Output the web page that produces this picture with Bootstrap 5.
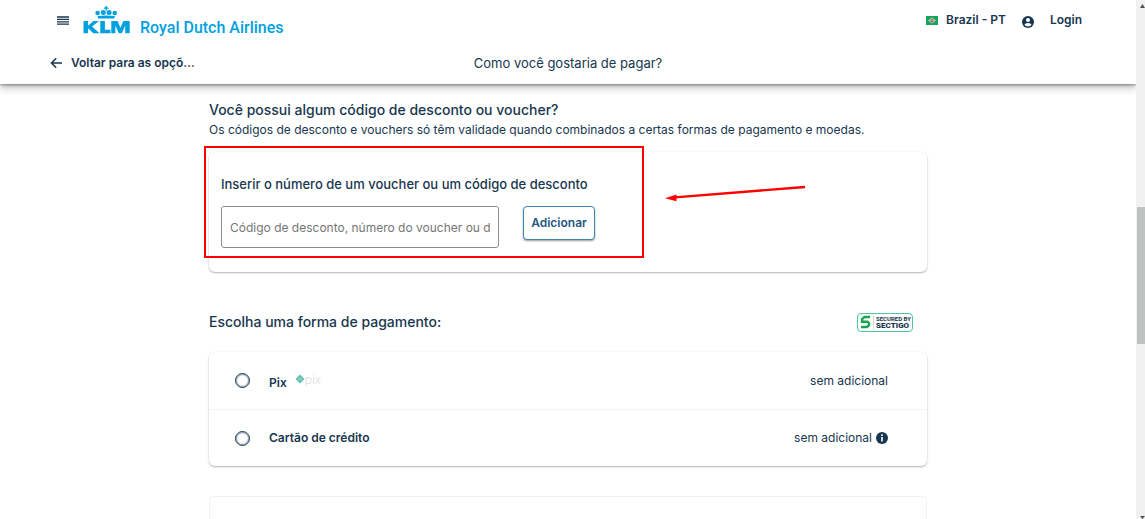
<!DOCTYPE html>
<html lang="pt-BR">
<head>
<meta charset="utf-8">
<meta name="viewport" content="width=device-width, initial-scale=1">
<title>KLM - Pagamento</title>
<link href="https://cdn.jsdelivr.net/npm/bootstrap@5.3.0/dist/css/bootstrap.min.css" rel="stylesheet">
<style>
:root { --navy: #17364f; --klm: #00a1de; --alert: #fe0000; }
body { font-family: Inter, "Open Sans", sans-serif; font-size: 12px; line-height: 20px; color: var(--navy); background: #fff; }
a { color: inherit; text-decoration: none; }
svg { display: block; flex: none; }
.site-header { z-index: 2; padding: 0 50px; box-shadow: 0 1px 3px rgba(0,0,0,.4), 0 3px 9px rgba(0,0,0,.28); }
.brand-row { height: 40px; }
.step-row { height: 44px; padding-top: 2px; display: grid; grid-template-columns: 1fr auto 1fr; }
.icon-button { border: 0; padding: 0; background: none; color: inherit; margin-left: 7px; }
.brand-link { color: var(--klm); gap: 10px; margin-left: 14px; }
.brand-name { padding-top: 16px; font-family: Roboto, sans-serif; font-weight: 500; font-size: 16px; }
.strong-text { font-weight: 600; }
.step-title, .row-title { font-size: 13px; line-height: 20px; font-weight: 500; }
.step-title { font-weight: 400; }
.content-column { max-width: 718px; padding-top: 16px; }
.section-title { font-size: 14px; line-height: 20px; font-weight: 500; margin: 0; }
.panel { border-radius: 6px; background: #fff; box-shadow: 0 1px 2px rgba(0,0,0,.3), 0 0 2px rgba(0,0,0,.04); }
.voucher-panel { margin-top: 12px; padding: 22px 12px 24px; }
.voucher-label { display: block; margin-bottom: 12px; }
.voucher-input { width: 278px; height: 42px; border: 1px solid #8c8c8c; border-radius: 3px; padding: 0 8px; font-size: 12px; color: var(--navy); }
.voucher-input::placeholder { color: #757575; opacity: 1; }
.add-button { width: 72px; height: 34px; padding: 0; border: 1px solid #4584ae; border-radius: 4px; background: #fff; color: #25567f; font-size: 12px; font-weight: 600; box-shadow: 0 1px 2px rgba(0,0,0,.4); }
.highlight-frame { left: -5px; top: -6px; width: 440px; height: 112px; border: 2px solid var(--alert); pointer-events: none; }
.highlight-arrow { left: 455px; top: 32px; pointer-events: none; }
.choice-heading { margin-top: 40px; padding-right: 14px; }
.choice-panel { margin-top: 20px; }
.choice { min-height: 57px; padding: 0 39px 0 26px; }
.choice + .choice { border-top: 1px solid #f1f3f4; }
.choice .form-check-input { width: 15px; height: 15px; margin: 0 19px 0 0; border: 1px solid var(--navy); box-shadow: inset 0 0 1px 1px rgba(23,54,79,.5); background-color: #fff; }
.choice .form-check-input:checked { background-color: var(--navy); }
.pix-word { font-family: Lato, sans-serif; font-size: 13px; line-height: 12px; font-weight: 300; color: #d3d3d3; }
.pix-logo { margin-bottom: 4px; }
.seal { border: 1px solid #52c3a0; border-radius: 4px; height: 19px; padding: 0 1px 0 2px; gap: 2px; }
.seal-text { font-family: "Roboto", sans-serif; font-weight: 700; line-height: 7px; font-size: 6px; padding-left: 2px; border-left: 1px solid #d5dadd; white-space: nowrap; }
.seal-name { font-size: 8px; line-height: 8px; font-weight: 900; }
.next-panel { margin-top: 30px; min-height: 120px; border: 1px solid #f0f1f1; border-radius: 4px; }
.scroll-track { width: 9px; background: #f1f1f1; }
.scroll-thumb { margin-left: 1px; background: #c0c2c1; }
</style>
<script src="https://cdn.jsdelivr.net/npm/bootstrap@5.3.0/dist/js/bootstrap.bundle.min.js" defer></script>
</head>
<body>
<div class="d-flex vh-100 overflow-hidden">
  <div class="d-flex flex-column flex-grow-1 overflow-hidden">
    <header class="site-header position-relative bg-white flex-shrink-0">
      <nav class="brand-row d-flex align-items-center" aria-label="Principal">
        <button class="icon-button" type="button" aria-label="Menu">
          <svg width="12" height="9" viewBox="0 0 12 9" fill="none" stroke="currentColor" stroke-width="1.300"><path d="M0 1h12M0 3.400h12M0 5.800h12M0 8.200h12"/></svg>
        </button>
        <a class="brand-link d-flex align-items-center" href="#" aria-label="KLM Royal Dutch Airlines">
          <svg width="47" height="28" viewBox="0 0 47 28" fill="currentColor" aria-hidden="true">
            <path d="M22.500 0h1.400v1.500h1.600v1.300h-1.600v1.600h-1.400V2.800h-1.600V1.500h1.600z"/>
            <circle cx="14.600" cy="7" r="2.300"/><circle cx="20.300" cy="6.600" r="2.500"/><circle cx="26.100" cy="6.600" r="2.500"/><circle cx="31.700" cy="7" r="2.300"/>
            <path d="M14.500 10q8.700-1 17.400 0l-.7 2.600h-16z"/>
            <path d="M.5 15h4.600v4.700l5.200-4.700h5.600l-6.800 5.600 7.400 6.600h-6.200l-5.200-5v5H.500zM17.300 15h4.600v8.700h5.600v3.500H17.300zM28.300 15h6.300l2.800 6.800 3-6.800h6.300v12.200h-4.500v-7.600l-3.400 7.600h-3l-3.400-7.600v7.600h-4.100z"/>
          </svg>
          <span class="brand-name">Royal Dutch Airlines</span>
        </a>
        <a class="strong-text d-flex align-items-center ms-auto" href="#">
          <svg class="me-2" width="12" height="9" viewBox="0 0 12 9"><path fill="#18a45b" d="M0 0h12v9H0z"/><path fill="#e0bf9e" d="M6 1.600 10 4.500 6 7.400 2 4.500z"/><circle cx="6" cy="4.500" r="1.700" fill="#58667e"/><path d="M4.200 4q2-.4 3.600 1" fill="none" stroke="#fff" stroke-width=".6"/></svg>
          Brazil - PT
        </a>
        <a class="strong-text d-flex align-items-center ms-3" href="#">
          <svg class="me-3 mt-1" width="12" height="12" viewBox="0 0 12 12"><circle cx="6" cy="6" r="6" fill="#17364f"/><circle cx="6" cy="4.100" r="2" fill="#fff"/><path fill="#fff" d="M2.400 8.700Q3 7 6 7t3.600 1.700Q8.300 10.400 6 10.400T2.400 8.700z"/></svg>
          <span class="me-1">Login</span>
        </a>
      </nav>
      <div class="step-row align-items-center">
        <a class="strong-text d-flex align-items-center" href="#">
          <svg class="me-2" width="13" height="12" viewBox="0 0 13 12" fill="none" stroke="currentColor" stroke-width="1.500"><path d="M12 6H1.500M6.200 1.300 1.500 6l4.700 4.700"/></svg>
          <span>Voltar para as opçõ…</span>
        </a>
        <h1 class="step-title m-0">Como você gostaria de pagar?</h1>
      </div>
    </header>
    <main class="content-column w-100 mx-auto">
      <h2 class="section-title">Você possui algum código de desconto ou voucher?</h2>
      <p class="m-0">Os códigos de desconto e vouchers só têm validade quando combinados a certas formas de pagamento e moedas.</p>
      <form class="panel voucher-panel position-relative">
        <label class="voucher-label row-title" for="voucher">Inserir o número de um voucher ou um código de desconto</label>
        <div class="d-flex align-items-start gap-4">
          <input class="voucher-input" id="voucher" type="text" placeholder="Código de desconto, número do voucher ou do cartão">
          <button class="add-button" type="button">Adicionar</button>
        </div>
        <div class="highlight-frame position-absolute"></div>
        <svg class="highlight-arrow position-absolute" width="144" height="18" viewBox="0 0 144 18" aria-hidden="true"><path d="M11 13.300 141 3" stroke="#fe0000" stroke-width="2.300"/><path d="M1 14.200 12.500 10.500v6.700z" fill="#fe0000"/></svg>
      </form>
      <div class="choice-heading d-flex align-items-center justify-content-between">
        <h2 class="section-title">Escolha uma forma de pagamento:</h2>
        <div class="seal d-flex align-items-center">
          <svg width="11" height="14" viewBox="0 0 11 14" fill="none" stroke="#17a650" stroke-width="2.400"><path d="M10 2H4.500L2 4.200v2.600h5.500L9 8.200v2L7 12H1"/></svg>
          <div class="seal-text">SECURED BY<div class="seal-name">SECTIGO</div></div>
        </div>
      </div>
      <div class="panel choice-panel">
        <div class="choice d-flex align-items-center">
          <input class="form-check-input" type="radio" name="pay" id="pix">
          <label class="strong-text pt-1" for="pix">Pix</label>
          <div class="pix-logo d-flex align-items-center ms-2">
            <svg width="10" height="10" viewBox="0 0 10 10"><path fill="#62bfb0" d="M5 .5 9.500 5 5 9.500.5 5z"/><path d="m2 2.500 3 2.500 3-2.500M2 7.500 5 5l3 2.500" fill="none" stroke="#a6ddd4" stroke-width=".7"/></svg>
            <span class="pix-word">pix</span>
          </div>
          <span class="ms-auto">sem adicional</span>
        </div>
        <div class="choice d-flex align-items-center">
          <input class="form-check-input" type="radio" name="pay" id="card-pay">
          <label class="strong-text" for="card-pay">Cartão de crédito</label>
          <span class="ms-auto">sem adicional</span>
          <svg class="ms-1" width="12" height="12" viewBox="0 0 12 12"><circle cx="6" cy="6" r="6" fill="#17364f"/><path fill="#fff" d="M5.200 2.300h1.600v1.600H5.200zM5.200 4.900h1.600v4.600H5.200z"/></svg>
        </div>
      </div>
      <section class="next-panel"></section>
    </main>
  </div>
  <div class="scroll-track d-flex flex-column flex-shrink-0 align-items-stretch" aria-hidden="true">
    <svg class="mt-1 ms-1" width="5" height="4" viewBox="0 0 5 4"><path d="M0 4 2.500 0 5 4z" fill="#505050"/></svg>
    <div style="flex: 199"></div>
    <div class="scroll-thumb" style="flex: 138"></div>
    <div style="flex: 172"></div>
    <svg class="ms-1" width="5" height="3" viewBox="0 0 5 3"><path d="M0 0h5L2.500 3z" fill="#505050"/></svg>
  </div>
</div>
</body>
</html>
